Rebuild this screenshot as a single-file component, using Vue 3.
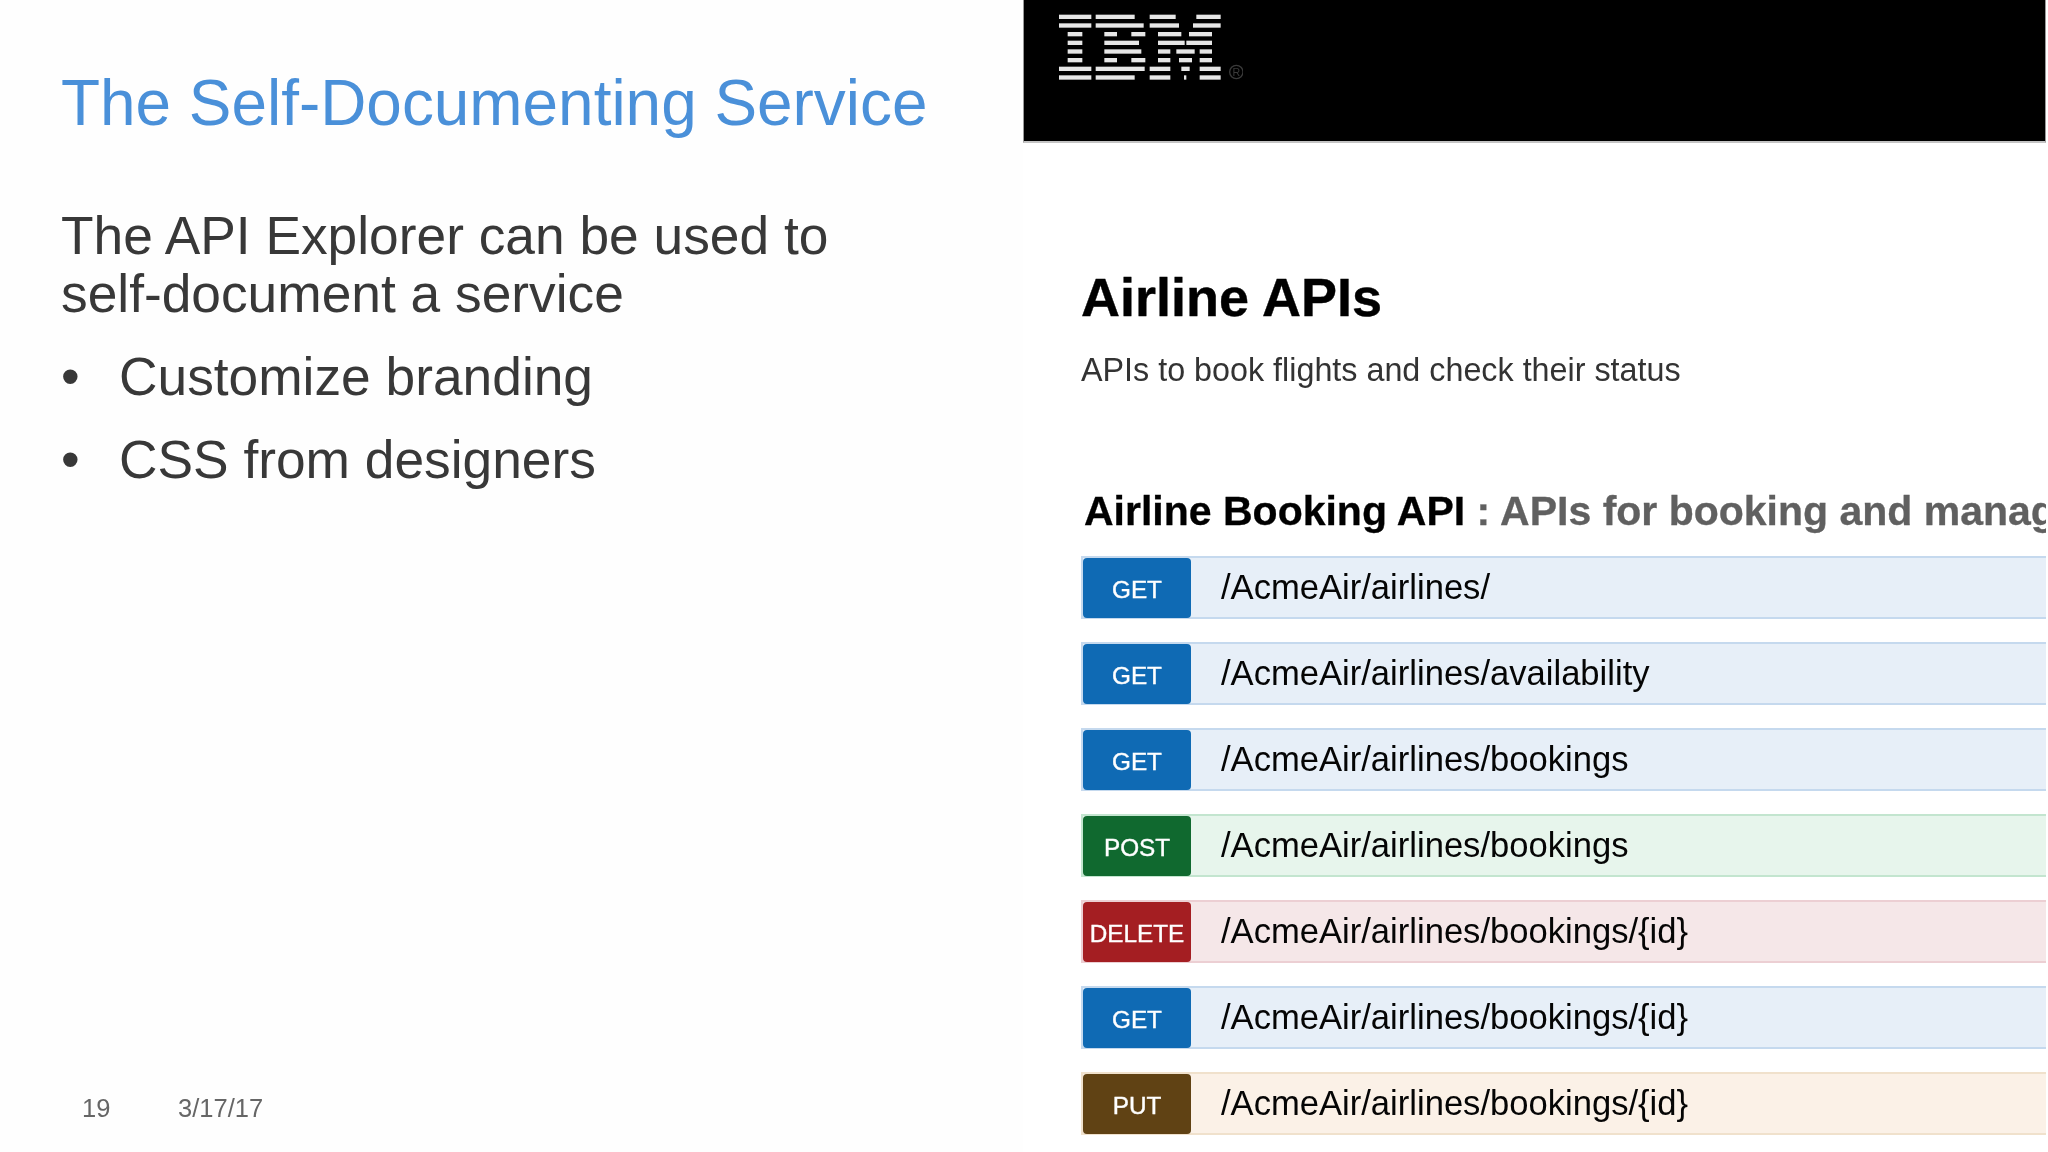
<script setup>
const bars = [
  [0,118,215],[1,118,215],[2,144,188],[3,144,188],[4,144,188],[5,144,188],[6,118,215],[7,118,215],
  [0,228,345],[1,228,372],[2,254,292],[2,335,377],[3,254,358],[4,254,365],[5,254,292],[5,335,377],[6,228,375],[7,228,345],
  [0,390,468],[0,530,603],[1,390,478],[1,520,603],[2,415,485],[2,508,577],[3,415,495],[3,500,577],
  [4,415,452],[4,470,525],[4,540,577],[5,415,452],[5,478,517],[5,540,577],[6,390,452],[6,485,510],[6,540,603],[7,390,452],[7,493,500],[7,540,603]
]
const rows = [
  { m: 'GET', p: '/AcmeAir/airlines/', c: 'get' },
  { m: 'GET', p: '/AcmeAir/airlines/availability', c: 'get' },
  { m: 'GET', p: '/AcmeAir/airlines/bookings', c: 'get' },
  { m: 'POST', p: '/AcmeAir/airlines/bookings', c: 'post' },
  { m: 'DELETE', p: '/AcmeAir/airlines/bookings/{id}', c: 'del' },
  { m: 'GET', p: '/AcmeAir/airlines/bookings/{id}', c: 'get' },
  { m: 'PUT', p: '/AcmeAir/airlines/bookings/{id}', c: 'put' }
]
</script>

<template>
  <div class="slide">
    <section class="left">
      <h1 class="title">The Self-Documenting Service</h1>
      <p class="lead">The API Explorer can be used to<br />self-document a service</p>
      <ul class="bullets">
        <li>Customize branding</li>
        <li>CSS from designers</li>
      </ul>
      <footer class="foot">
        <span class="num">19</span>
        <span>3/17/17</span>
      </footer>
    </section>
    <section class="right">
      <header class="brand">
        <svg class="logo" width="190" height="70" viewBox="100 30 570 210" aria-label="IBM">
          <rect v-for="(b, i) in bars" :key="i" :x="b[1]" :y="44 + b[0] * 26" :width="b[2] - b[1]" height="13" fill="#e6e6e6" />
          <circle cx="650" cy="216" r="20" fill="none" stroke="#3a3a3a" stroke-width="4" />
          <text x="650" y="228" text-anchor="middle" font-size="32" fill="#3a3a3a">R</text>
        </svg>
      </header>
      <div class="doc">
        <h2 class="api-title">Airline APIs</h2>
        <p class="api-sub">APIs to book flights and check their status</p>
        <h3 class="group"><b>Airline Booking API</b><span class="sep"> : APIs for booking and managing airline reservations</span></h3>
        <div class="list">
          <div v-for="(r, i) in rows" :key="i" class="row" :class="r.c">
            <span class="method">{{ r.m }}</span>
            <span class="path">{{ r.p }}</span>
          </div>
        </div>
      </div>
    </section>
  </div>
</template>

<style>
html, body { margin: 0; background: #fff; }
</style>

<style scoped>
.slide {
  width: 2048px;
  height: 1152px;
  display: flex;
  overflow: hidden;
  background: #fefefe;
  font-family: "Liberation Sans", Arial, sans-serif;
  filter: blur(0.4px);
}
.left {
  width: 1023px;
  box-sizing: border-box;
  padding: 65px 0 0 61px;
  display: flex;
  flex-direction: column;
}
.title {
  margin: 0;
  font-size: 63.9px;
  font-weight: 400;
  line-height: 76px;
  color: #4a90d9;
}
.lead {
  margin: 66px 0 0;
  font-size: 53.3px;
  line-height: 58px;
  color: #383838;
}
.bullets {
  margin: 25px 0 0;
  padding: 0;
  list-style: none;
  font-size: 53.3px;
  line-height: 58px;
  color: #383838;
}
.bullets li {
  position: relative;
  padding-left: 58px;
  margin-bottom: 25px;
}
.bullets li::before {
  content: "•";
  position: absolute;
  left: 0;
}
.foot {
  margin-top: auto;
  padding: 0 0 29px 21px;
  display: flex;
  font-size: 25.5px;
  line-height: 30px;
  color: #666;
}
.num { width: 96px; }
.right {
  width: 1025px;
  flex: none;
  box-sizing: border-box;
  padding-right: 2px;
  display: flex;
  flex-direction: column;
  background: #fff;
  overflow: hidden;
}
.brand {
  height: 143px;
  flex: none;
  background: #000;
  padding: 10px 0 0 30px;
  box-sizing: border-box;
  border-bottom: 2px solid #c4c4c4;
  border-left: 1px solid #999;
  border-right: 1px solid #999;
}
.logo {
  display: block;
  margin-left: -1px;
  filter: blur(0.5px);
}
.doc {
  padding: 0 0 0 58px;
  overflow: hidden;
}
.api-title {
  margin: 122px 0 0;
  font-size: 54px;
  line-height: 64px;
  font-weight: 700;
  color: #000;
  -webkit-text-stroke: 0.4px #000;
}
.api-sub {
  margin: 21px 0 0;
  font-size: 32.3px;
  line-height: 40px;
  color: #333;
}
.group {
  margin: 97px 0 0 3px;
  font-size: 41px;
  line-height: 48px;
  font-weight: 700;
  white-space: nowrap;
  color: #000;
  -webkit-text-stroke: 0.3px currentColor;
}
.sep { color: #606060; }
.list {
  margin-top: 21px;
  display: flex;
  flex-direction: column;
  gap: 23px;
}
.row {
  height: 63px;
  box-sizing: border-box;
  border: 2px solid;
  border-right: 0;
  display: flex;
  align-items: center;
}
.method {
  width: 108px;
  height: 60px;
  flex: none;
  border-radius: 4px;
  color: #fff;
  font-size: 24.3px;
  -webkit-text-stroke: 0.4px #fff;
  display: flex;
  align-items: center;
  justify-content: center;
  padding-top: 5px;
  box-sizing: border-box;
}
.path {
  margin-left: 30px;
  font-size: 34.6px;
  color: #050505;
}
.get { background: #e7eff8; border-color: #c5d9ee; }
.get .method { background: #0f6ab4; }
.post { background: #e7f5ec; border-color: #c3e5cf; }
.post .method { background: #10692f; }
.del { background: #f5e7e8; border-color: #eccfd3; }
.del .method { background: #a41e22; }
.put { background: #fbf1e7; border-color: #f0e1cc; }
.put .method { background: #604214; }
</style>
